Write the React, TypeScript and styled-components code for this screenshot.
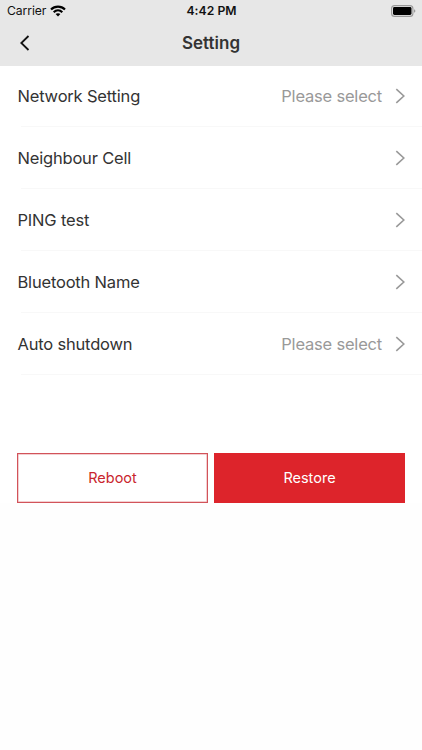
import React from "react";
import styled, { createGlobalStyle } from "styled-components";

const GlobalStyle = createGlobalStyle`
  * { box-sizing: border-box; }
  body { margin: 0; background: #fefefe; font-family: Inter, "Liberation Sans", sans-serif; color: #333; }
  button { font-family: inherit; }
`;

const Screen = styled.main`
  width: 422px;
  height: 750px;
  background: #fefefe;
  overflow: hidden;
`;

const Header = styled.header`
  height: 65.5px;
  background: #e7e7e7;
`;

const StatusBar = styled.div`
  height: 22px;
  display: grid;
  grid-template-columns: 1fr auto 1fr;
  align-items: center;
  padding: 0 6px 0 7px;
  color: #111;
`;

const Carrier = styled.div`
  display: flex;
  align-items: center;
  gap: 4px;
  font-size: 12.2px;
  line-height: 22px;
  letter-spacing: -0.1px;
`;

const Time = styled.div`
  font-size: 12.2px;
  font-weight: 600;
  line-height: 22px;
  letter-spacing: 0.05px;
`;

const BatterySlot = styled.div`
  display: flex;
  justify-content: flex-end;
`;

const NavBar = styled.nav`
  height: 43px;
  display: grid;
  grid-template-columns: 50px 1fr 50px;
  align-items: center;
`;

const BackButton = styled.button`
  display: flex;
  height: 43px;
  padding: 0 0 2px 19px;
  align-items: center;
  border: 0;
  background: none;
`;

const Title = styled.h1`
  margin: 0;
  text-align: center;
  font-size: 17px;
  line-height: 43px;
  font-weight: 600;
`;

const List = styled.ul`
  list-style: none;
  margin: 0;
  padding: 0;
  background: #fff;
`;

const Row = styled.li`
  height: 61.9px;
  margin-left: 17.5px;
  padding-right: 16px;
  display: flex;
  align-items: center;
  background: linear-gradient(#f8f8f8, #f8f8f8) 3px 100% / 100% 1px no-repeat;
`;

const Label = styled.span`
  flex: 1;
  font-size: 16.5px;
  letter-spacing: -0.19px;
`;

const Value = styled.span`
  font-size: 16.5px;
  letter-spacing: -0.2px;
  color: #999;
  margin-right: 13px;
`;

const Actions = styled.div`
  display: grid;
  grid-template-columns: 1fr 1fr;
  gap: 6px;
  padding: 78px 17px 0;
  background: #fff;
`;

const ActionButton = styled.button<{ $filled?: boolean }>`
  height: 50px;
  padding: 0;
  border: 1px solid ${(p) => (p.$filled ? "#dd242b" : "#d2535a")};
  background: ${(p) => (p.$filled ? "#dd242b" : "#fff")};
  box-shadow: ${(p) => (p.$filled ? "none" : "inset 0 0 0 0.5px #e8a0a4")};
  color: ${(p) => (p.$filled ? "#fff" : "#c9252d")};
  font-size: 14.5px;
`;

const WifiIcon = () => (
  <svg width="16" height="12" viewBox="0 0 16 12" fill="none" stroke="#000" strokeWidth="2.2">
    <path d="M1 4.5C4.8 0.7 11.2 0.7 15 4.5" />
    <path d="M3.7 7.2C6.2 4.8 9.8 4.8 12.3 7.2" />
    <path d="M8 11.5 5.6 9.1C6.9 7.9 9.1 7.9 10.4 9.1Z" fill="#000" stroke="none" />
  </svg>
);

const BatteryIcon = () => (
  <svg width="25" height="12" viewBox="0 0 25 12">
    <rect x="0.6" y="0.6" width="21.3" height="10.8" rx="3" fill="none" stroke="#999" strokeWidth="1.1" />
    <rect x="2" y="2" width="18.5" height="8" rx="1.4" fill="#000" />
    <path d="M23.2 4.2c1.5.7 1.5 2.9 0 3.6z" fill="#888" />
  </svg>
);

const BackIcon = () => (
  <svg width="11" height="16" viewBox="0 0 11 16" fill="none" stroke="#111" strokeWidth="1.8">
    <path d="M9.5 1 2.3 8l7.2 7" />
  </svg>
);

const ArrowIcon = () => (
  <svg width="11" height="16" viewBox="0 0 11 16" fill="none" stroke="#999" strokeWidth="1.6">
    <path d="M1.3 1.2 8.8 8l-7.5 6.8" />
  </svg>
);

const items: { label: string; value?: string }[] = [
  { label: "Network Setting", value: "Please select" },
  { label: "Neighbour Cell" },
  { label: "PING test" },
  { label: "Bluetooth Name" },
  { label: "Auto shutdown", value: "Please select" },
];

export default function App() {
  return (
    <Screen>
      <GlobalStyle />
      <Header>
        <StatusBar>
          <Carrier>
            <span>Carrier</span>
            <WifiIcon />
          </Carrier>
          <Time>4:42 PM</Time>
          <BatterySlot>
            <BatteryIcon />
          </BatterySlot>
        </StatusBar>
        <NavBar>
          <BackButton aria-label="Back">
            <BackIcon />
          </BackButton>
          <Title>Setting</Title>
        </NavBar>
      </Header>
      <List>
        {items.map(({ label, value }) => (
          <Row key={label}>
            <Label>{label}</Label>
            {value && <Value>{value}</Value>}
            <ArrowIcon />
          </Row>
        ))}
      </List>
      <Actions>
        <ActionButton>Reboot</ActionButton>
        <ActionButton $filled>Restore</ActionButton>
      </Actions>
    </Screen>
  );
}
